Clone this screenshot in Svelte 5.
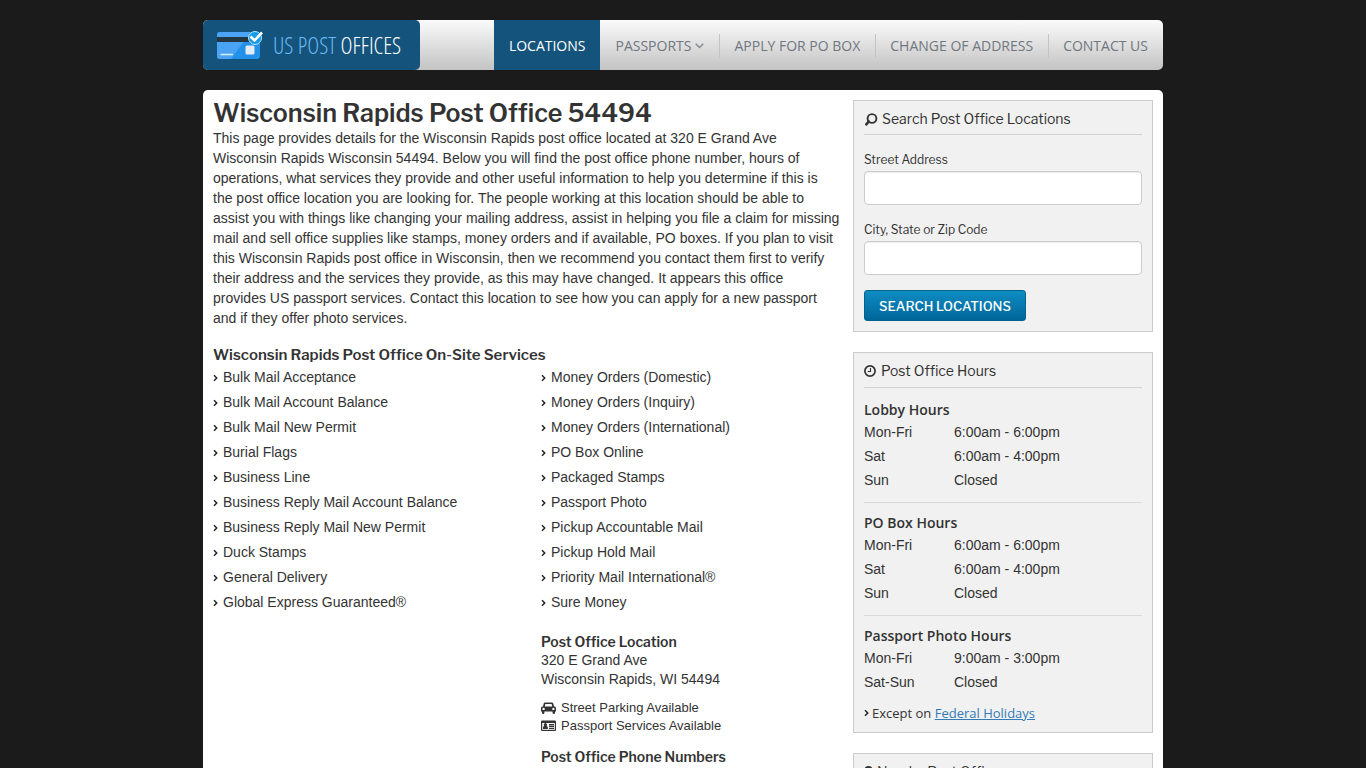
<script>
  const nav = [
    { label: "Locations", active: true },
    { label: "Passports", menu: true },
    { label: "Apply for PO Box" },
    { label: "Change of Address" },
    { label: "Contact Us" },
  ];

  const services = [
    [
      "Bulk Mail Acceptance",
      "Bulk Mail Account Balance",
      "Bulk Mail New Permit",
      "Burial Flags",
      "Business Line",
      "Business Reply Mail Account Balance",
      "Business Reply Mail New Permit",
      "Duck Stamps",
      "General Delivery",
      "Global Express Guaranteed®",
    ],
    [
      "Money Orders (Domestic)",
      "Money Orders (Inquiry)",
      "Money Orders (International)",
      "PO Box Online",
      "Packaged Stamps",
      "Passport Photo",
      "Pickup Accountable Mail",
      "Pickup Hold Mail",
      "Priority Mail International®",
      "Sure Money",
    ],
  ];

  const hours = [
    {
      title: "Lobby Hours",
      rows: [["Mon-Fri", "6:00am - 6:00pm"], ["Sat", "6:00am - 4:00pm"], ["Sun", "Closed"]],
    },
    {
      title: "PO Box Hours",
      rows: [["Mon-Fri", "6:00am - 6:00pm"], ["Sat", "6:00am - 4:00pm"], ["Sun", "Closed"]],
    },
    {
      title: "Passport Photo Hours",
      rows: [["Mon-Fri", "9:00am - 3:00pm"], ["Sat-Sun", "Closed"]],
    },
  ];

  let street = "";
  let city = "";
</script>

<style>
  :global(body) {
    background: #1b1b1b;
    color: #333;
    font: 14px/20px "Liberation Sans", Arial, sans-serif;
  }

  h1, h2, h3, p, ul { margin: 0; padding: 0; }
  ul { list-style: none; }

  .wrap {
    max-width: 960px;
    margin: 20px auto;
  }

  header {
    display: flex;
    justify-content: space-between;
    height: 50px;
    margin-bottom: 20px;
    border-radius: 5px;
    overflow: hidden;
    background: linear-gradient(#fbfbfb, #c3c3c3);
  }

  .logo {
    display: flex;
    align-items: center;
    gap: 9px;
    padding: 0 19px 0 13px;
    border-radius: 0 5px 5px 0;
    background: #14547c;
    color: #fff;
    font: 23px/50px "Open Sans Condensed Light", "Liberation Sans Narrow", "Open Sans", sans-serif;
    font-weight: 300;
    text-decoration: none;
    white-space: nowrap;
  }
  .logo span span { color: #6cb8f5; }

  nav { display: flex; }
  nav a {
    display: flex;
    align-items: center;
    gap: 4px;
    position: relative;
    padding: 2px 15px 0;
    color: #70777f;
    font: 14px/48px "Open Sans", sans-serif;
    text-decoration: none;
    text-transform: uppercase;
    white-space: nowrap;
  }
  nav a + a:not(:nth-child(2))::before {
    content: "";
    position: absolute;
    left: 0;
    top: 14px;
    width: 1px;
    height: 24px;
    background: #c4c4c4;
  }
  nav a.active {
    background: #14547c;
    color: #fff;
  }

  .page {
    display: grid;
    grid-template-columns: minmax(0, 1fr) 300px;
    gap: 10px;
    padding: 10px;
    border-radius: 5px;
    background: #fff;
  }

  h1, h2, .panel label, .search button {
    font-family: "Libre Franklin", Inter, sans-serif;
  }
  h1 {
    margin-bottom: 2px;
    font-size: 25px;
    font-weight: 600;
    line-height: 26px;
  }
  .intro { padding-right: 3px; }
  main h2 {
    font-size: 14px;
    font-weight: 600;
    line-height: 19px;
  }
  main .services-title {
    margin-top: 18px;
    font-size: 15px;
  }

  .columns {
    display: grid;
    grid-template-columns: 1fr 1fr;
    column-gap: 26px;
  }
  .columns li {
    display: flex;
    align-items: center;
    gap: 5px;
    line-height: 25px;
  }

  .details {
    grid-column: 2;
    margin-top: 17px;
  }
  .details address {
    font-style: normal;
    line-height: 19px;
  }
  .details .features {
    margin: 10px 0 12px;
    font-size: 13px;
  }
  .details .features li { line-height: 18px; }

  aside {
    display: flex;
    flex-direction: column;
    gap: 20px;
  }
  .panel {
    padding: 6px 10px 10px;
    border: 1px solid #ccc;
    background: #f1f1f1;
  }
  .panel h2 {
    display: flex;
    align-items: center;
    gap: 4px;
    padding-bottom: 4px;
    border-bottom: 1px solid #d2d2d2;
    font-size: 14px;
    font-weight: 400;
    line-height: 23px;
  }

  .search label {
    display: block;
    padding: 15px 0 2px;
    font-size: 12px;
    line-height: 19px;
  }
  .search input {
    display: block;
    box-sizing: border-box;
    width: 100%;
    height: 34px;
    padding: 6px 12px;
    border: 1px solid #ccc;
    border-radius: 4px;
    background: #fff;
    font: inherit;
    box-shadow: inset 0 1px 1px rgba(0, 0, 0, 0.075);
  }
  .search button {
    display: block;
    height: 31px;
    margin-top: 15px;
    padding: 0 14px;
    border: 1px solid #00628f;
    border-radius: 3px;
    background: linear-gradient(#0e8cc2, #00669a);
    color: #fff;
    font-size: 13px;
    font-weight: 500;
    text-transform: uppercase;
    cursor: pointer;
  }

  .hours { padding-bottom: 9px; }
  .hours h2 { padding-bottom: 5px; }
  .hours h3 {
    padding-top: 12px;
    font: 600 14px/20px "Open Sans", sans-serif;
  }
  .hours table {
    width: 100%;
    border-collapse: collapse;
  }
  .hours th,
  .hours td {
    padding: 0;
    font-weight: 400;
    line-height: 24px;
    text-align: left;
  }
  .hours th { width: 90px; }
  .hours section + section {
    margin-top: 10px;
    border-top: 1px solid #d9d9d9;
  }
  .hours section + section h3 { padding-top: 10px; }
  .note {
    display: flex;
    align-items: center;
    gap: 3px;
    margin-top: 9px;
    font: 13px/20px "Open Sans", sans-serif;
  }
  .note a { color: #337ab7; }

  svg { flex: none; }
</style>

{#snippet chevron()}
  <svg width="5" height="8" viewBox="0 0 5 8" fill="none" stroke="#222" stroke-width="1.5" aria-hidden="true">
    <path d="M1 1.3 3.7 4 1 6.7" />
  </svg>
{/snippet}

<div class="wrap">
  <header>
    <a class="logo" href="/">
      <svg width="48" height="30" viewBox="0 0 48 30" aria-hidden="true">
        <rect x="1" y="2" width="43" height="27" rx="3" fill="#2390ea" />
        <path d="M4 2H35L15 29H4a3 3 0 0 1-3-3V5a3 3 0 0 1 3-3z" fill="#4ba3f3" />
        <path d="M1 7H44V12H1z" fill="#233843" />
        <path d="M4.500 24.500H17" stroke="#d9efff" stroke-width="1.500" />
        <rect x="29.500" y="15.500" width="9" height="9" rx="1.500" fill="#e3edf3" />
        <circle cx="39" cy="8" r="6.500" fill="#169ce8" stroke="#b8e3fa" />
        <path d="M34.500 6.500 38.500 10.500 46 2.500" fill="none" stroke="#fff" stroke-width="2.600" />
      </svg>
      <span><span>US POST</span> OFFICES</span>
    </a>
    <nav>
      {#each nav as item}
        <a href="#{item.label}" class:active={item.active}>
          {item.label}
          {#if item.menu}
            <svg width="9" height="6" viewBox="0 0 9 6" fill="none" stroke="#858b92" stroke-width="1.400" aria-hidden="true">
              <path d="M.7 .8 4.500 4.600 8.300 .8" />
            </svg>
          {/if}
        </a>
      {/each}
    </nav>
  </header>

  <div class="page">
    <main>
      <h1>Wisconsin Rapids Post Office 54494</h1>
      <p class="intro">
        This page provides details for the Wisconsin Rapids post office located at 320 E Grand Ave
        Wisconsin Rapids Wisconsin 54494. Below you will find the post office phone number, hours of
        operations, what services they provide and other useful information to help you determine if
        this is the post office location you are looking for. The people working at this location
        should be able to assist you with things like changing your mailing address, assist in helping
        you file a claim for missing mail and sell office supplies like stamps, money orders and if
        available, PO boxes. If you plan to visit this Wisconsin Rapids post office in Wisconsin, then
        we recommend you contact them first to verify their address and the services they provide, as
        this may have changed. It appears this office provides&nbsp;US passport services. Contact this
        location to see how you can apply for a new passport and if they offer photo services.
      </p>

      <h2 class="services-title">Wisconsin Rapids Post Office On-Site Services</h2>
      <div class="columns">
        {#each services as list}
          <ul>
            {#each list as service}
              <li>{@render chevron()}{service}</li>
            {/each}
          </ul>
        {/each}

        <div class="details">
          <h2>Post Office Location</h2>
          <address>320 E Grand Ave<br />Wisconsin Rapids, WI 54494</address>
          <ul class="features">
            <li>
              <svg width="15" height="12" viewBox="0 0 15 12" fill="#333" aria-hidden="true">
                <path fill-rule="evenodd" d="M4 .5h7q1 0 1.300 1L13 4.500h.5Q15 4.700 15 6v3.500h-1V11q0 1-1.200 1T11.600 11V9.500H3.400V11q0 1-1.200 1T1 11V9.500H0V6Q0 4.700 1.500 4.500H2l.7-3Q3 .5 4 .5zM4.400 2l-.6 2.500h7.400L10.600 2zM2.600 5.700a1.200 1.200 0 1 0 0 2.400 1.200 1.200 0 0 0 0-2.400zm9.800 0a1.200 1.200 0 1 0 0 2.400 1.200 1.200 0 0 0 0-2.400z" />
              </svg>
              Street Parking Available
            </li>
            <li>
              <svg width="15" height="12" viewBox="0 0 15 12" aria-hidden="true">
                <rect x="0" y="0.500" width="15" height="10.500" rx="1" fill="#333" />
                <path d="M1.200 3h12.600v6.800H1.200z" fill="#fff" />
                <path d="M2 9V7.500q0-1.200 1.300-1.400a1.700 1.700 0 1 1 2.200 0Q6.800 6.300 6.800 7.500V9zM8 4h5v1.400H8zM8 6h5v1.200H8zM8 8h5v1H8z" fill="#333" />
              </svg>
              Passport Services Available
            </li>
          </ul>
          <h2>Post Office Phone Numbers</h2>
        </div>
      </div>
    </main>

    <aside>
      <form class="panel search" on:submit|preventDefault>
        <h2>
          <svg width="14" height="14" viewBox="0 0 14 14" fill="none" stroke="#333" aria-hidden="true">
            <circle cx="8" cy="6.500" r="4.400" stroke-width="1.900" />
            <path d="M4.700 9.500 2.300 12.300" stroke-width="2.600" stroke-linecap="round" />
          </svg>
          Search Post Office Locations
        </h2>
        <label for="street">Street Address</label>
        <input id="street" type="text" bind:value={street} />
        <label for="city">City, State or Zip Code</label>
        <input id="city" type="text" bind:value={city} />
        <button type="submit">Search Locations</button>
      </form>

      <div class="panel hours">
        <h2>
          <svg width="13" height="14" viewBox="0 0 13 14" fill="none" stroke="#333" aria-hidden="true">
            <circle cx="6" cy="7" r="5.100" stroke-width="1.700" />
            <path d="M6.500 4V7.500H3.700" stroke-width="1.100" />
          </svg>
          Post Office Hours
        </h2>
        {#each hours as group}
          <section>
            <h3>{group.title}</h3>
            <table>
              <tbody>
                {#each group.rows as [day, time]}
                  <tr><th scope="row">{day}</th><td>{time}</td></tr>
                {/each}
              </tbody>
            </table>
          </section>
        {/each}
        <p class="note">{@render chevron()}<span>Except on <a href="#holidays">Federal Holidays</a></span></p>
      </div>

      <div class="panel">
        <h2>
          <svg width="9" height="14" viewBox="0 0 9 14" fill="#333" aria-hidden="true">
            <path fill-rule="evenodd" d="M4.500 1a4 4 0 0 1 4 4Q8.500 7 4.500 13 .5 7 .5 5a4 4 0 0 1 4-4zm0 2.200a1.800 1.800 0 1 0 0 3.600 1.800 1.800 0 0 0 0-3.600z" />
          </svg>
          Nearby Post Offices
        </h2>
      </div>
    </aside>
  </div>
</div>
